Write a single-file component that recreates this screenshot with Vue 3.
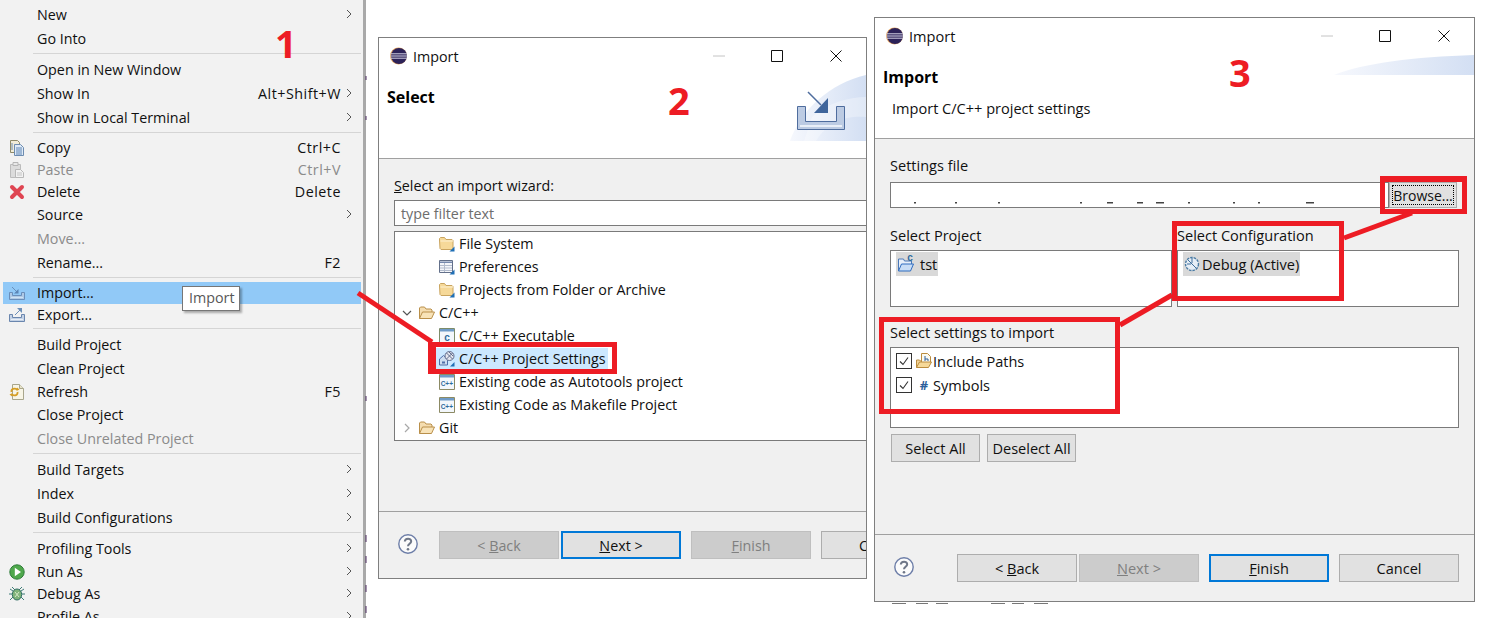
<script setup>
const menu = [
  { label: 'New', arrow: true },
  { label: 'Go Into' },
  { sep: true },
  { label: 'Open in New Window' },
  { label: 'Show In', key: 'Alt+Shift+W', arrow: true },
  { label: 'Show in Local Terminal', arrow: true },
  { sep: true },
  { label: 'Copy', key: 'Ctrl+C', icon: 'i-copy', short: true },
  { label: 'Paste', key: 'Ctrl+V', icon: 'i-paste', short: true, off: true },
  { label: 'Delete', key: 'Delete', icon: 'i-delete', short: true },
  { label: 'Source', arrow: true },
  { label: 'Move...', off: true },
  { label: 'Rename...', key: 'F2' },
  { sep: true },
  { label: 'Import...', icon: 'i-import', short: true, active: true },
  { label: 'Export...', icon: 'i-export', short: true },
  { sep: true },
  { label: 'Build Project' },
  { label: 'Clean Project' },
  { label: 'Refresh', key: 'F5', icon: 'i-refresh', short: true },
  { label: 'Close Project' },
  { label: 'Close Unrelated Project', off: true },
  { sep: true },
  { label: 'Build Targets', arrow: true },
  { label: 'Index', arrow: true },
  { label: 'Build Configurations', arrow: true },
  { sep: true },
  { label: 'Profiling Tools', arrow: true },
  { label: 'Run As', icon: 'i-run', short: true, arrow: true },
  { label: 'Debug As', icon: 'i-debug', short: true, arrow: true },
  { label: 'Profile As', arrow: true }
]
const tree = [
  { label: 'File System', icon: 'i-folder', depth: 2 },
  { label: 'Preferences', icon: 'i-prefs', depth: 2 },
  { label: 'Projects from Folder or Archive', icon: 'i-folder', depth: 2 },
  { label: 'C/C++', icon: 'i-open', depth: 1, twist: 'down' },
  { label: 'C/C++ Executable', icon: 'i-cexe', depth: 2 },
  { label: 'C/C++ Project Settings', icon: 'i-settings', depth: 2, selected: true },
  { label: 'Existing code as Autotools project', icon: 'i-cpp', depth: 2 },
  { label: 'Existing Code as Makefile Project', icon: 'i-cpp', depth: 2 },
  { label: 'Git', icon: 'i-open', depth: 1, twist: 'right' }
]
const pathMarks = [ [914, 2], [955, 2], [998, 2], [1080, 2], [1107, 6], [1137, 6], [1156, 8], [1188, 2], [1233, 2], [1258, 2], [1306, 8] ]
const edgeMarks = [ [365, 76, 2, 4], [365, 116, 2, 4], [365, 396, 2, 5], [365, 535, 2, 7], [365, 556, 2, 7], [365, 585, 2, 7], [365, 606, 2, 7] ]
const footMarks = [ [892, 14], [916, 12], [936, 12], [991, 14], [1012, 12], [1034, 14] ]
</script>

<template>
  <div class="stage">
    <svg class="sprite" width="0" height="0" aria-hidden="true">
      <defs>
        <linearGradient id="sw" x1="0" x2="1" y1="0" y2="0">
          <stop offset="0" stop-color="#f6f8fd" />
          <stop offset="1" stop-color="#d3dff3" />
        </linearGradient>
        <symbol id="i-copy" viewBox="0 0 16 16">
          <path d="M1.5 .5h7l2 2v10h-9z" fill="#f1ecd8" stroke="#8f8a68" />
          <path d="M5.5 4.500h6l3 3v8h-9z" fill="#dfeaf6" stroke="#6d8cb0" />
          <path d="M7 8h6M7 10h6M7 12h6M7 14h6" stroke="#5f86b5" />
          <path d="M3 3v7" stroke="#6d8cb0" />
        </symbol>
        <symbol id="i-paste" viewBox="0 0 16 16">
          <path d="M1.5 2.500h10v13h-10z" fill="#dcdcdc" stroke="#bcbcbc" />
          <path d="M4 .5h5v3H4z" fill="#e8e8e8" stroke="#b5b5b5" />
          <path d="M6.5 7.500h5l3 3v5h-8z" fill="#f2f2f2" stroke="#b8b8b8" />
          <path d="M8 11h5M8 13h5" stroke="#c4c4c4" />
        </symbol>
        <symbol id="i-delete" viewBox="0 0 16 16">
          <path d="M3 3l10 10M13 3L3 13" stroke="#df4552" stroke-width="4" stroke-linecap="round" />
        </symbol>
        <symbol id="i-import" viewBox="0 0 16 16">
          <path d="M.5 7.500h3v3h9v-3h3v7H.5z" fill="#b9c9df" stroke="#5d7ba6" />
          <path d="M2 12.500h12" stroke="#e4ebf4" />
          <path d="M3 2l5 5" stroke="#5c7da8" />
          <path d="M9.500 4v4.500H5z" fill="#4a6e9f" />
        </symbol>
        <symbol id="i-export" viewBox="0 0 16 16">
          <path d="M.5 7.500h3v3h9v-3h3v7H.5z" fill="#c4d2e5" stroke="#6a86ae" />
          <path d="M2 12.500h12" stroke="#e8eef6" />
          <path d="M6 8l5-5" stroke="#6c8fb8" />
          <path d="M8 1h5v5z" fill="#6c8fb8" />
        </symbol>
        <symbol id="i-refresh" viewBox="0 0 16 16">
          <path d="M3.500 .5h7l4 4v11h-11z" fill="#f8f5e6" stroke="#a9a68c" />
          <path d="M10.500 .5v4h4" fill="#e7e3cb" stroke="#a9a68c" />
          <path d="M8.500 5.500C5 3.500 2 5 2.500 8M2.500 10.500C6 12.500 9 11 8.500 8" fill="none" stroke="#d69e24" stroke-width="1.800" />
          <path d="M8 3.500l2.500 2-3 1.500zM3 12.500L.5 10.500l3-1.500z" fill="#d69e24" />
        </symbol>
        <symbol id="i-run" viewBox="0 0 16 16">
          <circle cx="8" cy="8" r="7.200" fill="#4fa84c" stroke="#2f7d3a" />
          <path d="M5.800 3.800l6.200 4.200-6.200 4.200z" fill="#fff" />
        </symbol>
        <symbol id="i-debug" viewBox="0 0 16 16">
          <path d="M3 1l3 3M13 1l-3 3M0 8h3M13 8h3M1 14l3-3M15 14l-3-3M1 3l3 2M15 3l-3 2" stroke="#3f7d78" />
          <ellipse cx="8" cy="8.500" rx="4.700" ry="5.500" fill="#7fb37a" stroke="#2f6d62" />
          <path d="M6 6l4 5M10 6l-4 5" stroke="#d7e8c9" />
        </symbol>
        <symbol id="i-folder" viewBox="0 0 16 16">
          <path d="M.5 4V2.500l1-1h4l1.500 2h6l1 1v8l-1 1h-11l-1-1z" fill="#f6d999" stroke="#c9a45f" />
          <path d="M1.500 5h12.500" stroke="#fdf1d2" />
          <path d="M15.500 10.500v5h-5z" fill="#1f6fb5" />
        </symbol>
        <symbol id="i-open" viewBox="0 0 16 16">
          <path d="M.5 13.500V3l1-1h4l1.500 2h5l1 1v2" fill="#f5ddb0" stroke="#b98f4a" />
          <path d="M.5 13.500l3-6.500h12l-3 6.500z" fill="#f8e3b8" stroke="#b98f4a" />
        </symbol>
        <symbol id="i-prefs" viewBox="0 0 16 16">
          <path d="M.5 1.500h13v12H.5z" fill="#f4f6fa" stroke="#63708a" />
          <path d="M1 2.500h12v1.500H1z" fill="#7689ad" />
          <path d="M1 6.500h12M1 9h12M1 11.500h12M5.500 4v9" stroke="#b3bccd" />
          <path d="M15.500 10.500v5h-5z" fill="#1f6fb5" />
        </symbol>
        <symbol id="i-cexe" viewBox="0 0 16 16">
          <path d="M.5 .5h15v15H.5z" fill="#f3f7fb" stroke="#7d8c6a" />
          <path d="M1 1h14v2.500H1z" fill="#6f9bc7" />
          <text x="8" y="12.500" text-anchor="middle" class="icon-letter">c</text>
        </symbol>
        <symbol id="i-cpp" viewBox="0 0 16 16">
          <path d="M.5 .5h15v15H.5z" fill="#f3f7fb" stroke="#8c8a64" />
          <path d="M1 1h14v2.500H1z" fill="#6f9bc7" />
          <text x="7.800" y="11.800" text-anchor="middle" class="icon-letter small">C++</text>
        </symbol>
        <symbol id="i-settings" viewBox="0 0 16 16">
          <path d="M.5 14V8l4-3.500 4 3.500v6z" fill="#cdddf0" stroke="#4f6fa8" />
          <path d="M3 10.500h3v2H3z" fill="#4f6fa8" />
          <circle cx="10.500" cy="5" r="4.500" fill="#e4e6ee" stroke="#606c8c" />
          <path d="M7.500 2l6 6M10 1l4 4M13.500 2l-6 6" stroke="#606c8c" />
          <path d="M15.500 11v4.500H11z" fill="#1f6fb5" />
        </symbol>
        <symbol id="i-project" viewBox="0 0 18 18">
          <path d="M1.500 16V4h5l1 2h7v3" fill="#e7effa" stroke="#4a78b8" />
          <path d="M1.500 16l3-7h12l-3 7z" fill="#c8ddf6" stroke="#2f6cc0" />
          <text x="13" y="6" text-anchor="middle" class="icon-letter">c</text>
        </symbol>
        <symbol id="i-config" viewBox="0 0 16 16">
          <circle cx="8" cy="8" r="6.500" fill="#e6eef6" stroke="#4a7ba4" stroke-width="1.400" stroke-dasharray="2.500 1" />
          <path d="M4 4l8 8M8 2v5M3 8h4" stroke="#3f6f9c" />
        </symbol>
        <symbol id="i-include" viewBox="0 0 16 16">
          <path d="M.5 14.500V7h3l1 1h3v1" fill="#f2d397" stroke="#bb8c3e" />
          <path d="M5.500 9V.5h6l3 3v6" fill="#fbfaf0" stroke="#bb8c3e" />
          <path d="M9 3v5M9 6h3v2" fill="none" stroke="#2d5f9c" />
          <path d="M.5 14.500l3-5.500h12l-3 5.500z" fill="#f6d999" stroke="#bb8c3e" />
        </symbol>
        <symbol id="i-logo" viewBox="0 0 18 18">
          <circle cx="9.500" cy="9" r="8.500" fill="#e8a35a" />
          <circle cx="10" cy="9" r="8" fill="#2c2258" />
          <path d="M1.500 6.800h17M1.300 9h17.500M1.500 11.200h17" stroke="#d5d3e6" />
        </symbol>
        <symbol id="i-help" viewBox="0 0 20 20">
          <circle cx="10" cy="10" r="9.200" fill="#fbfbfb" stroke="#6d7ea8" stroke-width="1.400" />
          <path d="M6.800 7.500C7 3.800 13.200 3.800 13.200 7.300c0 2.500-3.200 2.500-3.200 5" fill="none" stroke="#6f7788" stroke-width="2" />
          <circle cx="10" cy="15.200" r="1.300" fill="#6f7788" />
        </symbol>
      </defs>
    </svg>

    <nav class="menu">
      <template v-for="item in menu" :key="item.label || undefined">
        <div v-if="item.sep" class="sep"><i></i></div>
        <div v-else class="item" :class="{ short: item.short, off: item.off, active: item.active }">
          <svg v-if="item.icon" class="micon" :class="{ faded: item.active }" width="16" height="16"><use :href="'#' + item.icon" /></svg>
          <span class="mlabel">{{ item.label }}</span>
          <span v-if="item.key" class="mkey">{{ item.key }}</span>
          <span class="marrow">
            <svg v-if="item.arrow" width="6" height="10" viewBox="0 0 6 10"><path d="M1 1l4 4-4 4" fill="none" stroke="#555" /></svg>
          </span>
        </div>
      </template>
    </nav>
    <div class="tooltip">Import</div>

    <section class="window w2">
      <div class="titlebar">
        <svg class="logo" width="18" height="18"><use href="#i-logo" /></svg>
        <span class="wtitle">Import</span>
        <div class="wctrl">
          <svg width="12" height="12" viewBox="0 0 12 12"><path d="M0 6h12" stroke="#c4c4c4" /></svg>
          <svg width="12" height="12" viewBox="0 0 12 12"><path d="M.5 .5h11v11H.5z" fill="none" stroke="#111" /></svg>
          <svg width="12" height="12" viewBox="0 0 12 12"><path d="M.5 .5l11 11M11.500 .5l-11 11" stroke="#111" /></svg>
        </div>
      </div>
      <header class="banner">
        <h2>Select</h2>
        <svg class="swoosh-big" width="76" height="66" viewBox="0 0 76 66">
          <path d="M0 66C10 36 40 8 76 0v66z" fill="url(#sw)" />
          <path d="M22 42C38 28 58 22 76 22v20C58 40 38 46 26 66H14z" fill="#fff" opacity=".3" />
          <path d="M7.500 31.500h8v15h31v-15h8v23h-47z" fill="#bccbe3" stroke="#4f6d9e" />
          <path d="M10 51h42" stroke="#e9eff8" stroke-width="2" />
          <path d="M18 17l13 13" stroke="#4f6d9e" stroke-width="1.500" />
          <path d="M38 23v15H24z" fill="#3f659c" />
        </svg>
      </header>
      <main class="body">
        <label class="lbl"><u>S</u>elect an import wizard:</label>
        <div class="filter">type filter text</div>
        <div class="tree">
          <div v-for="row in tree" :key="row.label" class="trow" :class="'d' + row.depth">
            <span class="twist">
              <svg v-if="row.twist === 'down'" width="10" height="6" viewBox="0 0 10 6"><path d="M1 1l4 4 4-4" fill="none" stroke="#555" stroke-width="1.200" /></svg>
              <svg v-if="row.twist === 'right'" width="6" height="10" viewBox="0 0 6 10"><path d="M1 1l4 4-4 4" fill="none" stroke="#a8a8a8" stroke-width="1.200" /></svg>
            </span>
            <span class="tcell" :class="{ sel: row.selected }">
              <svg width="16" height="16"><use :href="'#' + row.icon" /></svg>
              <span>{{ row.label }}</span>
            </span>
          </div>
        </div>
      </main>
      <footer class="foot">
        <svg class="help" width="20" height="20"><use href="#i-help" /></svg>
        <button class="btn off first">&lt; <u>B</u>ack</button>
        <button class="btn primary next"><u>N</u>ext &gt;</button>
        <button class="btn off"><u>F</u>inish</button>
        <button class="btn">Cancel</button>
      </footer>
    </section>

    <section class="window w3">
      <div class="titlebar">
        <svg class="logo" width="18" height="18"><use href="#i-logo" /></svg>
        <span class="wtitle">Import</span>
        <div class="wctrl">
          <svg width="12" height="12" viewBox="0 0 12 12"><path d="M0 6h12" stroke="#c4c4c4" /></svg>
          <svg width="12" height="12" viewBox="0 0 12 12"><path d="M.5 .5h11v11H.5z" fill="none" stroke="#111" /></svg>
          <svg width="12" height="12" viewBox="0 0 12 12"><path d="M.5 .5l11 11M11.500 .5l-11 11" stroke="#111" /></svg>
        </div>
      </div>
      <header class="banner">
        <h2>Import</h2>
        <p class="sub">Import C/C++ project settings</p>
        <svg class="swoosh-flat" width="140" height="20" viewBox="0 0 140 20">
          <path d="M0 20C30 8 80 2 140 0v20z" fill="url(#sw)" />
        </svg>
      </header>
      <main class="body b3">
        <label class="lbl">Settings file</label>
        <div class="fileline">
          <div class="pathbox"></div>
          <button class="browse"><span>Browse...</span></button>
        </div>
        <div class="columns">
          <div>
            <label class="lbl">Select Project</label>
            <div class="listbox">
              <span class="chip">
                <svg width="18" height="18"><use href="#i-project" /></svg><span class="tst">tst</span>
              </span>
            </div>
          </div>
          <div>
            <label class="lbl">Select Configuration</label>
            <div class="listbox">
              <span class="chip">
                <svg width="16" height="16"><use href="#i-config" /></svg><span class="dbg">Debug (Active)</span>
              </span>
            </div>
          </div>
        </div>
        <label class="lbl third">Select settings to import</label>
        <div class="listbox settings">
          <div class="check">
            <span class="cb"><svg width="12" height="12" viewBox="0 0 12 12"><path d="M2 6.500l3 3 5-7" fill="none" stroke="#333" stroke-width="1.100" /></svg></span>
            <svg width="16" height="16"><use href="#i-include" /></svg>
            <span>Include Paths</span>
          </div>
          <div class="check">
            <span class="cb"><svg width="12" height="12" viewBox="0 0 12 12"><path d="M2 6.500l3 3 5-7" fill="none" stroke="#333" stroke-width="1.100" /></svg></span>
            <span class="hash">#</span>
            <span>Symbols</span>
          </div>
        </div>
        <div class="pair">
          <button class="btn small">Select All</button>
          <button class="btn small">Deselect All</button>
        </div>
      </main>
      <footer class="foot">
        <svg class="help" width="20" height="20"><use href="#i-help" /></svg>
        <button class="btn first f3">&lt; <u>B</u>ack</button>
        <button class="btn off next"><u>N</u>ext &gt;</button>
        <button class="btn primary"><u>F</u>inish</button>
        <button class="btn">Cancel</button>
      </footer>
    </section>

    <span class="num n1">1</span>
    <span class="num n2">2</span>
    <span class="num n3">3</span>

    <svg class="marks" width="1492" height="618" viewBox="0 0 1492 618">
      <rect v-for="(m, i) in edgeMarks" :key="'e' + i" :x="m[0]" :y="m[1]" :width="m[2]" :height="m[3]" fill="#4a2a5e" opacity=".5" />
      <rect v-for="(m, i) in pathMarks" :key="'p' + i" :x="m[0]" y="202" :width="m[1]" height="1.500" fill="#444" />
      <rect v-for="(m, i) in footMarks" :key="'f' + i" :x="m[0]" y="603" :width="m[1]" height="1" fill="#777" />
      <g fill="#ed1c24" fill-rule="evenodd">
        <path d="M428 342h189v32H428zM436 347v22h176v-22z" />
        <path d="M1380 176h87v38h-87zM1385 182v27h77v-27z" />
        <path d="M1172 221h172v80h-172zM1177 226v70h162v-70z" />
        <path d="M879 317h241v97H879zM884 322v87h231v-87z" />
      </g>
      <g stroke="#ed1c24" stroke-width="5">
        <path d="M358 293l74 49" />
        <path d="M1412 213l-68 25" />
        <path d="M1172 295l-52 30" />
      </g>
    </svg>
  </div>
</template>

<style scoped>
.stage {
  position: relative;
  width: 1492px;
  height: 618px;
  overflow: hidden;
  background: #fff;
  color: #101010;
  font-family: "Open Sans", "Noto Sans", sans-serif;
  font-size: 14.3px;
}
.sprite { position: absolute; }
.icon-letter { font-family: "Liberation Sans", sans-serif; font-size: 10px; font-weight: 700; fill: #2f6a9c; }
.icon-letter.small { font-size: 6.500px; }

.menu {
  position: absolute;
  left: 0;
  top: 0;
  width: 358px;
  height: 615px;
  padding: 3px 2px 0 3px;
  box-sizing: content-box;
  background: #f2f2f2;
  border-right: 3px solid #a9a9a9;
  overflow: hidden;
}
.item {
  display: flex;
  align-items: center;
  height: 24px;
  box-sizing: border-box;
  padding: 0 0 2px 34px;
  position: relative;
}
.item.short { height: 22px; }
.item.active { background: #91c9f7; }
.item.off { color: #8b8b8b; }
.micon { position: absolute; left: 6px; top: 3px; }
.micon.faded { opacity: .75; }
.mlabel { white-space: nowrap; }
.mkey { margin-left: auto; white-space: nowrap; letter-spacing: .5px; }
.marrow { width: 20px; margin-left: auto; flex: none; display: flex; padding-left: 5px; box-sizing: border-box; }
.mkey + .marrow { margin-left: 0; }
.sep { height: 7px; padding: 2px 0 0 30px; box-sizing: border-box; }
.sep i { display: block; height: 1px; background: #d5d5d5; }

.tooltip {
  position: absolute;
  left: 182px;
  top: 286px;
  width: 58px;
  height: 25px;
  box-sizing: border-box;
  padding-left: 6px;
  line-height: 22px;
  background: #fff;
  border: 1px solid #767676;
  color: #575757;
  box-shadow: 2px 2px 2px rgba(0, 0, 0, .3);
}

.window {
  position: absolute;
  display: flex;
  flex-direction: column;
  overflow: hidden;
  box-sizing: border-box;
  border: 1px solid #7f7f7f;
  background: #f0f0f0;
}
.w2 { left: 378px; top: 37px; width: 489px; height: 542px; }
.w3 { left: 874px; top: 17px; width: 601px; height: 585px; font-size: 14.55px; }

.titlebar {
  display: flex;
  align-items: center;
  flex: none;
  height: 38px;
  box-sizing: border-box;
  padding: 0 0 2px 10px;
  background: #fff;
}
.wtitle { margin-left: 6px; }
.wctrl {
  display: flex;
  gap: 46px;
  margin-left: auto;
  margin-right: 24px;
}
.wctrl svg:last-child { margin-left: 1px; }
.banner {
  position: relative;
  flex: none;
  height: 83px;
  box-sizing: border-box;
  padding: 10px 0 0 8px;
  background: #fff;
  border-bottom: 1px solid #a0a0a0;
}
.banner h2 { margin: 0; font-size: 16px; line-height: 22px; font-weight: 700; color: #000; }
.sub { margin: 10px 0 0 9px; line-height: 20px; }
.swoosh-big { position: absolute; right: 0; top: -1px; }
.swoosh-flat { position: absolute; right: 0; top: -1px; }

.body {
  flex: 1;
  min-height: 0;
  padding: 17px 0 0 15px;
  display: flex;
  flex-direction: column;
}
.lbl { display: block; line-height: 20px; height: 20px; white-space: nowrap; }
.filter {
  flex: none;
  width: 520px;
  height: 26px;
  margin-top: 4px;
  box-sizing: border-box;
  padding-left: 6px;
  line-height: 25px;
  background: #fff;
  border: 1px solid #7a7a7a;
  color: #6d6d6d;
}
.tree {
  flex: none;
  width: 520px;
  height: 210px;
  margin-top: 5px;
  box-sizing: border-box;
  background: #fff;
  border: 1px solid #7a7a7a;
}
.trow { display: flex; align-items: center; height: 23px; }
.twist { width: 24px; flex: none; display: flex; justify-content: center; }
.d2 { padding-left: 20px; }
.tcell { display: flex; align-items: center; gap: 4px; height: 22px; padding-right: 2px; white-space: nowrap; }
.sel { background: #cce8ff; margin-left: -4px; padding-left: 4px; }

.foot {
  flex: none;
  height: 67px;
  box-sizing: border-box;
  display: flex;
  align-items: flex-start;
  gap: 10px;
  padding: 19px 0 0 19px;
  border-top: 1px solid #a0a0a0;
}
.help { flex: none; margin-top: 3px; margin-right: 11px; }
.btn {
  flex: none;
  width: 120px;
  height: 28px;
  padding: 0;
  box-sizing: border-box;
  font: inherit;
  color: inherit;
  background: #e1e1e1;
  border: 1px solid #adadad;
}
.btn.off { background: #cccccc; color: #7f7f7f; border-color: #bfbfbf; }
.btn.primary { border: 2px solid #0078d7; }
.next { margin-left: -8px; }
.f3 { margin-left: 22px; }

.b3 { padding: 16px 15px 0 15px; }
.fileline { display: flex; align-items: stretch; height: 26px; margin-top: 7px; flex: none; }
.pathbox { flex: 1; background: #fff; border: 1px solid #7a7a7a; box-sizing: border-box; }
.browse {
  flex: none;
  width: 68px;
  margin-right: 2px;
  padding: 2px;
  font: inherit;
  font-size: 14px;
  color: inherit;
  background: #e1e1e1;
  border: 1px solid #adadad;
  box-sizing: border-box;
}
.browse span {
  display: flex;
  align-items: center;
  justify-content: center;
  height: 100%;
  border: 1px dotted #000;
  box-sizing: border-box;
}
.columns {
  display: grid;
  grid-template-columns: 282px 282px;
  gap: 5px;
  margin-top: 17px;
  flex: none;
}
.listbox {
  box-sizing: border-box;
  height: 57px;
  margin-top: 5px;
  padding: 1px 5px;
  background: #fff;
  border: 1px solid #7a7a7a;
}
.chip {
  display: inline-flex;
  align-items: center;
  height: 24px;
  padding: 0 1px;
  background: #d9d9d9;
}
.tst { margin-left: 5px; }
.dbg { margin-left: 2px; }
.third { margin-top: 15px; }
.settings { height: 81px; padding-top: 1px; }
.check { display: flex; align-items: center; height: 24px; white-space: nowrap; }
.check svg { flex: none; }
.cb {
  flex: none;
  width: 16px;
  height: 16px;
  box-sizing: border-box;
  border: 1px solid #333;
  background: #fff;
  display: flex;
  align-items: center;
  justify-content: center;
  margin-right: 4px;
}
.check > span:last-child { margin-left: 1px; }
.hash { width: 16px; text-align: center; font-weight: 700; color: #2d5f9c; font-size: 13px; }
.pair { display: flex; gap: 7px; margin: 6px 0 0 1px; }
.btn.small { width: 89px; }

.num {
  position: absolute;
  font-family: "Open Sans", sans-serif;
  font-weight: 700;
  font-size: 38px;
  line-height: 38px;
  color: #ed1c24;
}
.n1 { left: 275px; top: 24px; }
.n2 { left: 668px; top: 81px; }
.n3 { left: 1229px; top: 53px; }
.marks { position: absolute; left: 0; top: 0; pointer-events: none; }
</style>
<style>
html, body { background: #fff; }
</style>
